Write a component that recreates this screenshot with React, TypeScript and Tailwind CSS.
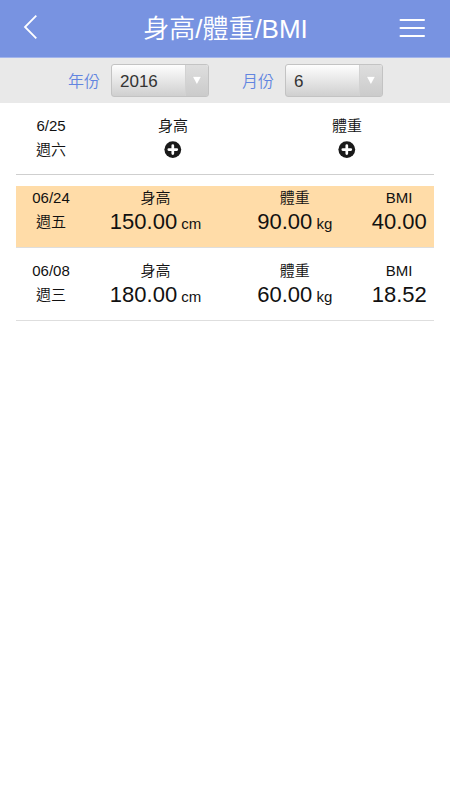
import React from 'react'

type RecordItem = {
  date: string
  day: string
  height: string
  weight: string
  bmi: string
  active?: boolean
}

const records: RecordItem[] = [
  { date: '06/24', day: '週五', height: '150.00', weight: '90.00', bmi: '40.00', active: true },
  { date: '06/08', day: '週三', height: '180.00', weight: '60.00', bmi: '18.52' },
]

const Header = () => {
  return (
    <header className="flex h-[58px] items-center justify-between border-b border-[#a3b5ec] bg-[#7893e1] pr-[24px] pl-[23px] text-white">
      <button aria-label="back" className="w-[28px] pb-[3px]">
        <svg width="16" height="26" viewBox="0 0 16 26" fill="none" stroke="currentColor" strokeWidth="1.8">
          <path d="M13.3 1.7 L2 13 L13.3 24.3" />
        </svg>
      </button>
      <h1 className="pl-px text-[26px] leading-[58px] font-[350]">身高/體重/BMI</h1>
      <button aria-label="menu" className="w-[27px] pb-[2px]">
        <svg width="27" height="20" viewBox="0 0 27 20" fill="none" stroke="currentColor" strokeWidth="2" strokeLinecap="round">
          <path d="M1.5 2 H25 M1.5 10 H25 M1.5 18 H25" />
        </svg>
      </button>
    </header>
  )
}

const Select = ({ value }: { value: string }) => {
  return (
    <div className="flex h-[33px] w-[98px] overflow-hidden rounded-[3px] border border-[#c3c3c3] bg-linear-to-b from-[#fefefe] to-[#cfcfcf]">
      <span className="flex-1 pl-[8px] text-[17px] leading-[33px] text-[#333]">{value}</span>
      <span className="flex w-[23px] justify-center border-l border-[#d2d2d2] bg-linear-to-b from-[#dedede] to-[#cbcbcb] pt-[11px]">
        <svg width="10" height="9" viewBox="0 0 10 9">
          <path d="M0.6 0 H9.2 L4.9 8 Z" fill="#fff" />
          <path d="M0.6 0.3 H9.2" stroke="#b5b5b5" strokeWidth="0.6" />
        </svg>
      </span>
    </div>
  )
}

const Filters = () => {
  return (
    <div className="flex h-[45px] items-center bg-[#e9e9e9] pl-[68px] text-[16px] font-[350] text-[#6285e0]">
      <label className="w-[43px] pt-0.5">年份</label>
      <Select value="2016" />
      <label className="ml-[33px] w-[43px] pt-0.5">月份</label>
      <Select value="6" />
    </div>
  )
}

const DateCell = ({ date, day }: { date: string; day: string }) => {
  return (
    <div className="w-[70px]">
      <p>{date}</p>
      <p>{day}</p>
    </div>
  )
}

const AddCell = ({ label }: { label: string }) => {
  return (
    <div className="flex-1">
      <p>{label}</p>
      <button aria-label={label} className="flex h-6 w-full items-center justify-center">
        <svg width="18" height="18" viewBox="0 0 18 18">
          <circle cx="8.8" cy="8.6" r="8.4" fill="#1a1a1a" />
          <path d="M8.8 4.6 V12.6 M4.8 8.6 H12.8" stroke="#fff" strokeWidth="2.7" strokeLinecap="round" />
        </svg>
      </button>
    </div>
  )
}

const ValueCell = ({ label, value, unit }: { label: string; value: string; unit?: string }) => {
  return (
    <div>
      <p>{label}</p>
      <p className="whitespace-nowrap">
        <span className="text-[22px] leading-6">{value}</span>
        {unit && ` ${unit}`}
      </p>
    </div>
  )
}

const App = () => {
  return (
    <div className="min-h-screen bg-white font-['Liberation_Sans','Noto_Sans_CJK_TC',sans-serif] text-[#111]">
      <Header />
      <Filters />
      <main className="flex flex-col gap-[11px] px-4 pt-[11px] text-center text-[15px] leading-6 font-[350]">
        <section className="flex h-[61px] border-b border-[#cfcfcf]">
          <DateCell date="6/25" day="週六" />
          <AddCell label="身高" />
          <AddCell label="體重" />
        </section>
        {records.map((item) => (
          <section
            key={item.date}
            className={`flex h-[62px] border-b border-[#dedede] ${item.active ? 'bg-[#ffdca8]' : ''}`}
          >
            <DateCell date={item.date} day={item.day} />
            <div className="grid flex-1 grid-cols-[2fr_2fr_1fr]">
              <ValueCell label="身高" value={item.height} unit="cm" />
              <ValueCell label="體重" value={item.weight} unit="kg" />
              <ValueCell label="BMI" value={item.bmi} />
            </div>
          </section>
        ))}
      </main>
    </div>
  )
}

export default App
